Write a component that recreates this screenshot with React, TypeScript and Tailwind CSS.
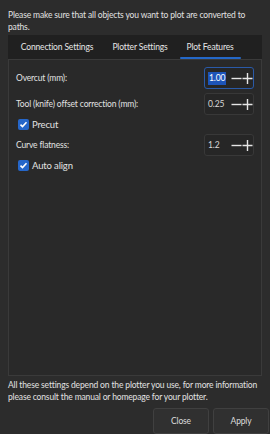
import React, {useState} from "react";

const font = {fontFamily: 'Lato, "Noto Sans", sans-serif'};

interface SpinProps {
    value: string;
    focused?: boolean;
}

const SpinBox: React.FC<SpinProps> = ({value, focused}) => {
    return (
        <div
            className={`flex h-[22px] w-[50px] items-center rounded-[3px] border bg-[#262626] ${
                focused ? "border-[#2a5aa8]" : "border-[#383838]"
            }`}
        >
            <div className="flex w-[26px] shrink-0 items-center pl-[3px]">
                <span className={focused ? "bg-[#1d54b8] px-[1px] leading-[13px] text-white" : "text-[#d8d8d8]"}>
                    {value}
                </span>
            </div>
            <div className="flex flex-1 items-center justify-start">
                <svg width="11" height="13" viewBox="0 0 11 13">
                    <path d="M0.5 6.5h10" stroke="#e6e6e6" strokeWidth="1.4"/>
                </svg>
                <svg width="11" height="13" viewBox="0 0 11 13">
                    <path d="M0.5 6.5h10M5.5 1v11" stroke="#e6e6e6" strokeWidth="1.4"/>
                </svg>
            </div>
        </div>
    );
};

const Check: React.FC<{label: string}> = ({label}) => (
    <div className="flex h-[19px] items-center gap-[3px] pl-[2px]">
        <div className="flex h-[11px] w-[11px] items-center justify-center rounded-[2px] bg-[#2566c9]">
            <svg width="9" height="9" viewBox="0 0 9 9">
                <path d="M1.5 4.6l2 2 4-4.4" stroke="white" strokeWidth="1.6" fill="none"/>
            </svg>
        </div>
        <span className="text-[9.5px] text-[#e2e2e2]">{label}</span>
    </div>
);

export default function App() {
    const [tab] = useState(2);
    const tabs = ["Connection Settings", "Plotter Settings", "Plot Features"];
    const widths = ["w-[98px]", "w-[68px]", "w-[72px]"];

    return (
        <div
            style={font}
            className="flex h-[434px] w-[270px] flex-col overflow-hidden bg-[#2c2c2c] text-[8.5px] leading-[12px] tracking-[-0.15px] text-[#e2e2e2]"
        >
            <div className="px-[8px] pt-[9px]">
                Please make sure that all objects you want to plot are converted to paths.
            </div>

            <div className="mx-[8px] mt-[2px] flex flex-1 flex-col">
                <div className="flex h-[24px] bg-[#202020]">
                    {tabs.map((t, i) => (
                        <div key={t} className={`relative flex items-center justify-center ${widths[i]}`}>
                            <span className="text-[#e6e6e6]">{t}</span>
                            {i === tab && (
                                <div className="absolute bottom-0 left-[6px] right-[5px] h-[2px] rounded-full bg-[#2468c8]"/>
                            )}
                        </div>
                    ))}
                </div>

                <div className="flex flex-1 flex-col border border-[#3a3a3a] bg-[#292929] pl-[7px] pr-[7px] pt-[7px]">
                    <div className="flex h-[22px] items-center justify-between">
                        <span>Overcut (mm):</span>
                        <SpinBox value="1.00" focused/>
                    </div>
                    <div className="mt-[4px] flex h-[22px] items-center justify-between">
                        <span>Tool (knife) offset correction (mm):</span>
                        <SpinBox value="0.25"/>
                    </div>
                    <Check label="Precut"/>
                    <div className="flex h-[22px] items-center justify-between">
                        <span>Curve flatness:</span>
                        <SpinBox value="1.2"/>
                    </div>
                    <Check label="Auto align"/>
                </div>
            </div>

            <div className="px-[8px] pt-[3px]">
                All these settings depend on the plotter you use, for more information please consult the manual or
                homepage for your plotter.
            </div>

            <div className="flex justify-end gap-[4px] pr-[1px] pt-[5px]">
                <button className="h-[26px] w-[56px] rounded-[3px] border border-[#404040] bg-[#303030] text-[#dcdcdc]">
                    Close
                </button>
                <button className="h-[26px] w-[56px] rounded-[3px] border border-[#404040] bg-[#303030] text-[#dcdcdc]">
                    Apply
                </button>
            </div>
        </div>
    );
}
